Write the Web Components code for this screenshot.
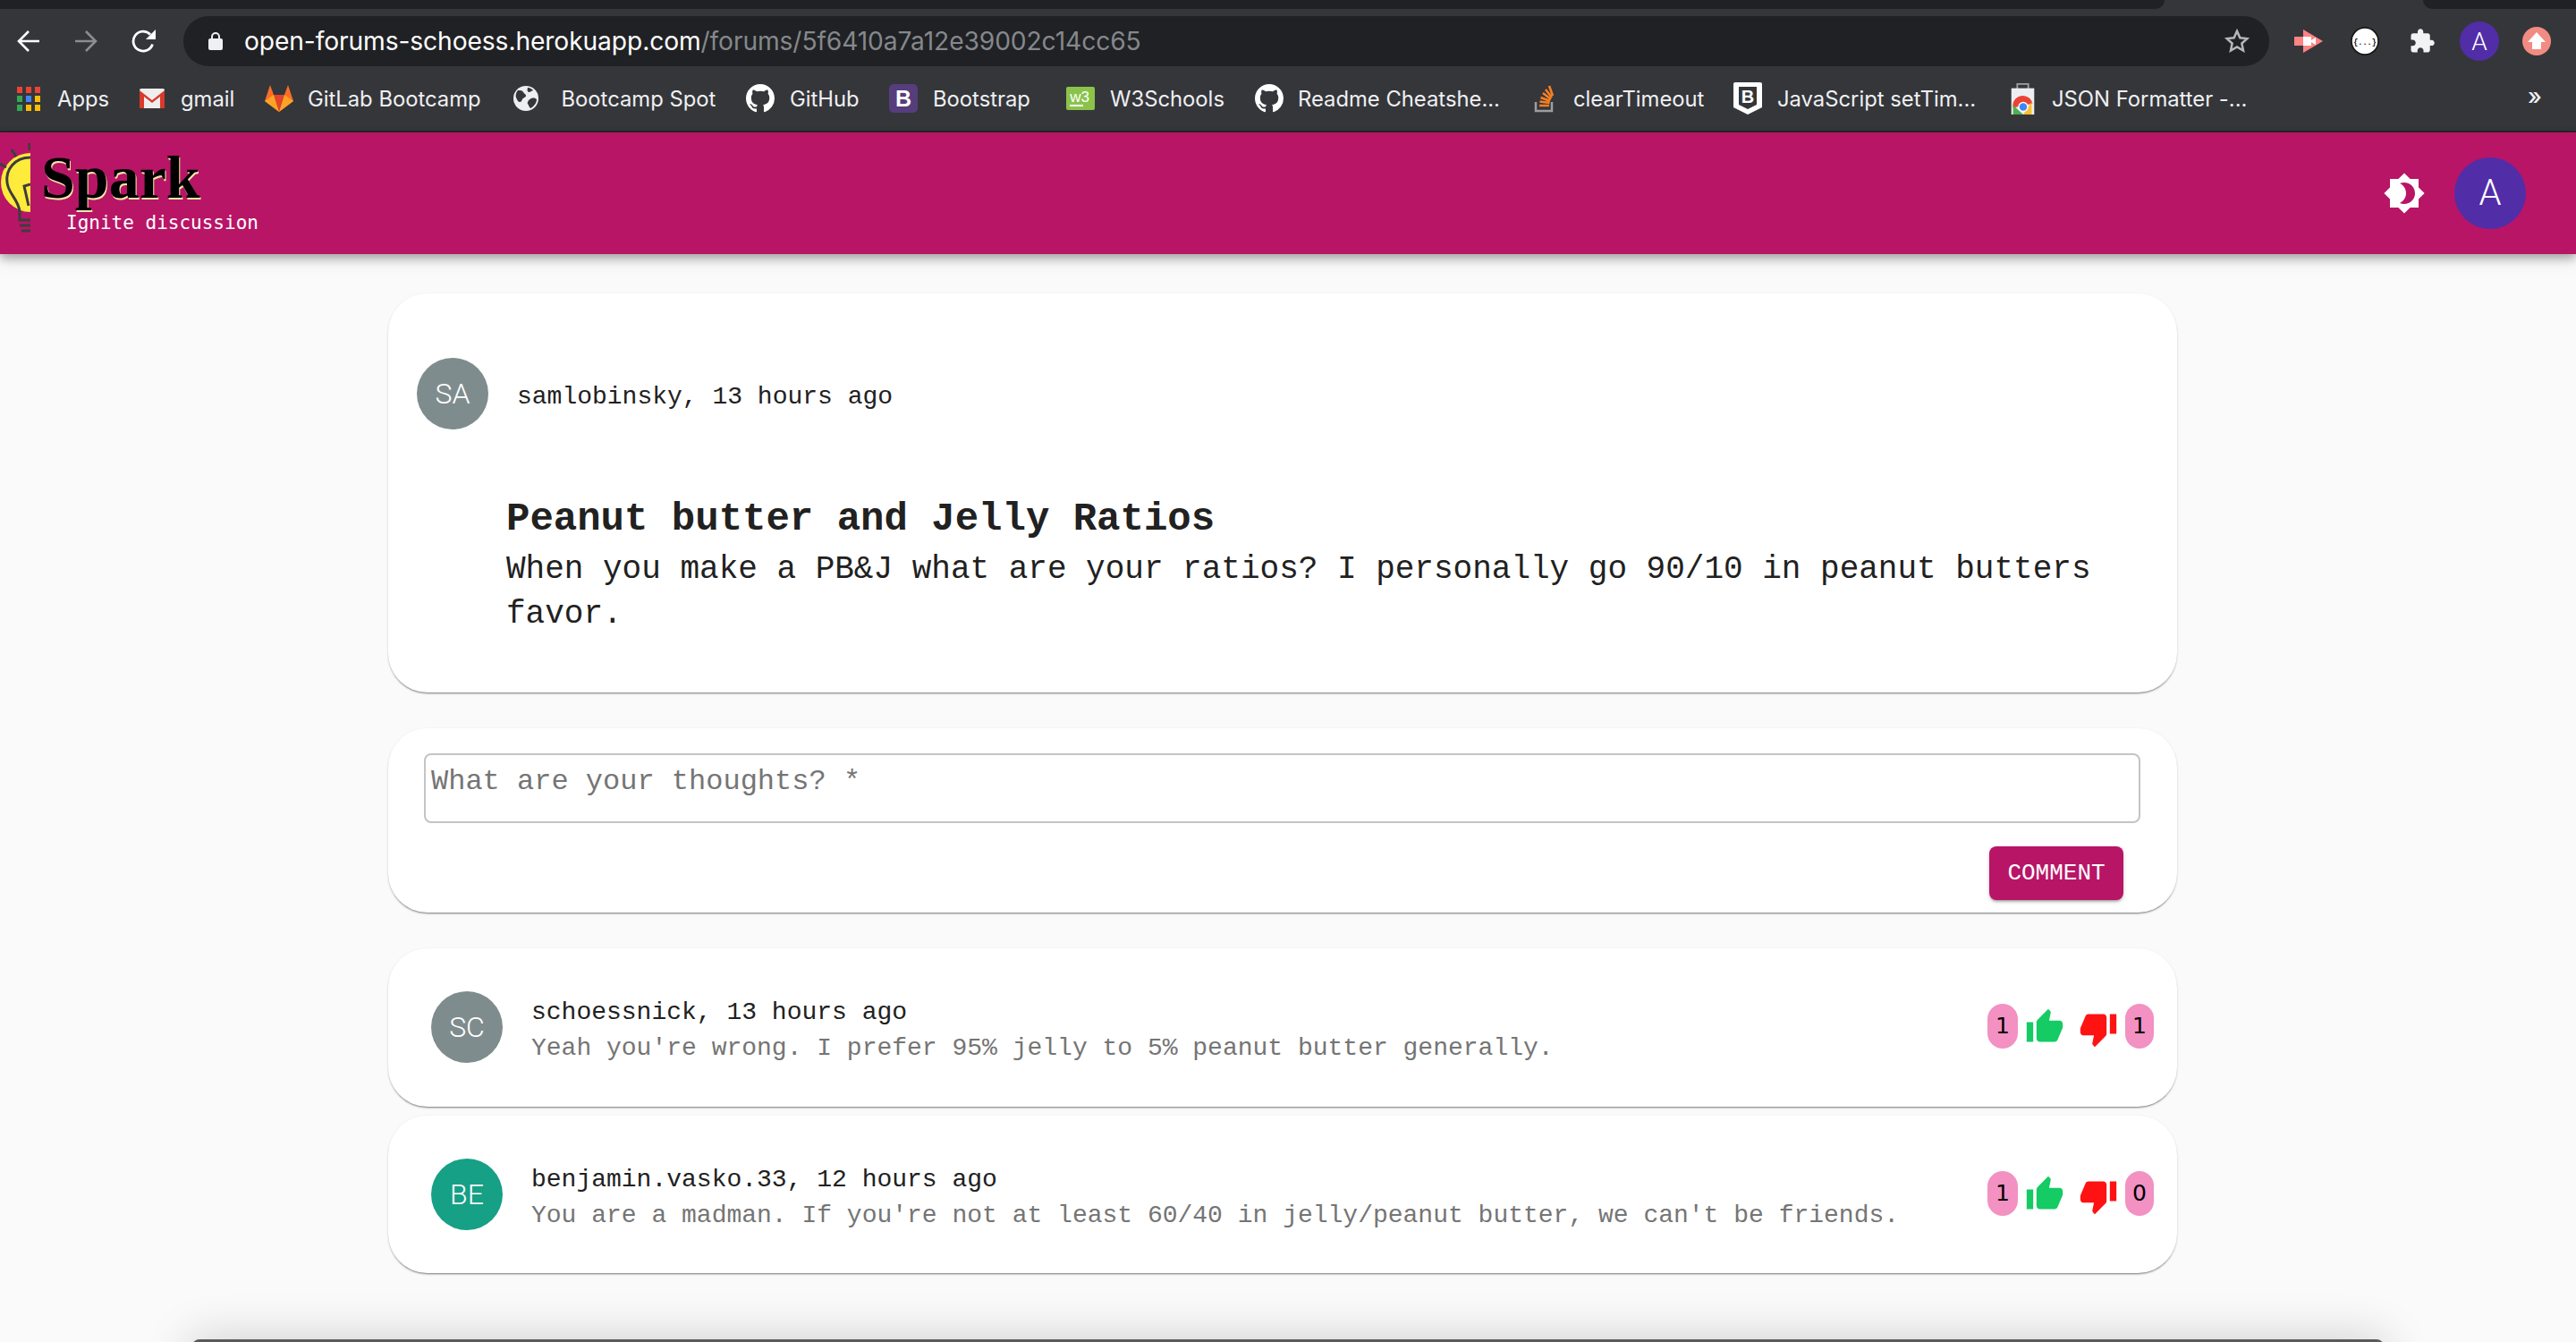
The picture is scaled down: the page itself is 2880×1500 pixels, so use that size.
<!DOCTYPE html>
<html lang="en"><head><meta charset="utf-8"><title>Spark</title>
<style>
html,body{margin:0;padding:0;height:1500px;overflow:hidden;background:#fafafa;font-family:"Liberation Mono",monospace}
</style></head>
<body>
<browser-chrome>
  <book-mark w="137" o="45"><svg slot="icon" width="26" height="27" viewBox="0 0 26 27"><g><rect x="0" y="0" width="6" height="7" fill="#ea4335"/><rect x="10" y="0" width="6" height="7" fill="#ea4335"/><rect x="20" y="0" width="6" height="7" fill="#ea4335"/><rect x="0" y="10" width="6" height="7" fill="#34a853"/><rect x="10" y="10" width="6" height="7" fill="#4285f4"/><rect x="20" y="10" width="6" height="7" fill="#fbbc05"/><rect x="0" y="20" width="6" height="7" fill="#34a853"/><rect x="10" y="20" width="6" height="7" fill="#fbbc05"/><rect x="20" y="20" width="6" height="7" fill="#fbbc05"/></g></svg>Apps</book-mark>
  <book-mark w="140" o="46"><svg slot="icon" width="28" height="22" viewBox="0 0 28 22"><rect width="28" height="22" rx="2" fill="#eee"/><path d="M0 2 14 13 28 2v20h-5V9L14 16 5 9v13H0z" fill="#d93a2b"/></svg>gmail</book-mark>
  <book-mark w="278" o="48"><svg slot="icon" width="32" height="30" viewBox="0 0 32 30"><path d="M16 30 0 18 3 9 6 0l4 11z" fill="#fc6d26"/><path d="M16 30 32 18 29 9 26 0l-4 11z" fill="#fc6d26"/><path d="M16 30 10 11h12z" fill="#e24329"/><path d="M16 30 0 18l10-7zM16 30l16-12-10-7z" fill="#fca326"/></svg>GitLab Bootcamp</book-mark>
  <book-mark w="260" o="53.5"><svg slot="icon" width="28" height="28" viewBox="0 0 28 28"><circle cx="14" cy="14" r="14" fill="#eceff1"/><path d="M5 5c3 0 5 0 6 2s3 2 3 4-3 2-4 4-1 3-3 3-3-3-4-5 0-6 2-8zM20 14c3-1 5 0 6 1 0 4-3 8-7 10-2-2-2-4-3-5s1-5 4-6zM16 2c3 0 5 2 6 3l-4 2c-2 0-3-2-2-5z" fill="#35363a"/></svg>Bootcamp Spot</book-mark>
  <book-mark w="160" o="49"><svg slot="icon" width="32" height="32" viewBox="0 0 16 16"><path fill="#fff" d="M8 0C3.58 0 0 3.58 0 8c0 3.54 2.29 6.53 5.47 7.59.4.07.55-.17.55-.38 0-.19-.01-.82-.01-1.49-2.01.37-2.53-.49-2.69-.94-.09-.23-.48-.94-.82-1.13-.28-.15-.68-.52-.01-.53.63-.01 1.08.58 1.23.82.72 1.21 1.87.87 2.33.66.07-.52.28-.87.51-1.07-1.78-.2-3.64-.89-3.64-3.95 0-.87.31-1.59.82-2.15-.08-.2-.36-1.02.08-2.12 0 0 .67-.21 2.2.82.64-.18 1.32-.27 2-.27.68 0 1.36.09 2 .27 1.53-1.04 2.2-.82 2.2-.82.44 1.1.16 1.92.08 2.12.51.56.82 1.27.82 2.15 0 3.07-1.87 3.75-3.65 3.95.29.25.54.73.54 1.48 0 1.07-.01 1.93-.01 2.2 0 .21.15.46.55.38A8.013 8.013 0 0 0 16 8c0-4.42-3.58-8-8-8z"/></svg>GitHub</book-mark>
  <book-mark w="198" o="49"><svg slot="icon" width="32" height="32" viewBox="0 0 32 32"><rect width="32" height="32" rx="5" fill="#563d7c"/><text x="16" y="25" text-anchor="middle" font-family="Liberation Sans" font-weight="700" font-size="25" fill="#fff">B</text></svg>Bootstrap</book-mark>
  <book-mark w="211" o="49"><svg slot="icon" width="32" height="26" viewBox="0 0 32 26"><rect width="32" height="26" rx="2" fill="#8bc34a"/><text x="15" y="17" text-anchor="middle" font-family="Liberation Sans" font-size="17" fill="#fff">w3</text><rect x="4" y="20" width="15" height="2" fill="#fff"/></svg>W3Schools</book-mark>
  <book-mark w="312" o="48"><svg slot="icon" width="32" height="32" viewBox="0 0 16 16"><path fill="#fff" d="M8 0C3.58 0 0 3.58 0 8c0 3.54 2.29 6.53 5.47 7.59.4.07.55-.17.55-.38 0-.19-.01-.82-.01-1.49-2.01.37-2.53-.49-2.69-.94-.09-.23-.48-.94-.82-1.13-.28-.15-.68-.52-.01-.53.63-.01 1.08.58 1.23.82.72 1.21 1.87.87 2.33.66.07-.52.28-.87.51-1.07-1.78-.2-3.64-.89-3.64-3.95 0-.87.31-1.59.82-2.15-.08-.2-.36-1.02.08-2.12 0 0 .67-.21 2.2.82.64-.18 1.32-.27 2-.27.68 0 1.36.09 2 .27 1.53-1.04 2.2-.82 2.2-.82.44 1.1.16 1.92.08 2.12.51.56.82 1.27.82 2.15 0 3.07-1.87 3.75-3.65 3.95.29.25.54.73.54 1.48 0 1.07-.01 1.93-.01 2.2 0 .21.15.46.55.38A8.013 8.013 0 0 0 16 8c0-4.42-3.58-8-8-8z"/></svg>Readme Cheatshe...</book-mark>
  <book-mark w="223" o="44"><svg slot="icon" width="24" height="32" viewBox="0 0 24 32"><path d="M2 20v10h18V20" fill="none" stroke="#9e9e9e" stroke-width="2.5"/><path d="M6 24h11M6.500 19.500l11 1.500M7.500 15l10.500 4M10 10l9 7M13 6l7 9M17 2l4 11" stroke="#f48024" stroke-width="2.600" fill="none"/></svg>clearTimeout</book-mark>
  <book-mark w="310" o="49"><svg slot="icon" width="32" height="36" viewBox="0 0 32 36"><path d="M2 0h28a2 2 0 0 1 2 2v26l-16 8-16-8V2a2 2 0 0 1 2-2z" fill="#fff"/><path d="M6 5h20v20l-10 5-10-5z" fill="#35363a"/><text x="16" y="23" text-anchor="middle" font-family="Liberation Sans" font-weight="700" font-size="20" fill="#fff">B</text></svg>JavaScript setTim...</book-mark>
  <book-mark w="300" o="46"><svg slot="icon" width="27" height="36" viewBox="0 0 27 38"><path d="M7 8V2h13v6" fill="none" stroke="#9e9e9e" stroke-width="2"/><rect y="7" width="27" height="31" fill="#eceff1"/><path d="M2 30a11.500 11.500 0 0 1 23-5z" fill="#ea4335"/><path d="M2 27v11h12z" fill="#4caf50"/><path d="M14 38h10V23z" fill="#fbc02d"/><circle cx="14" cy="29" r="6" fill="#fff"/><circle cx="14" cy="29" r="4.500" fill="#4285f4"/></svg>JSON Formatter -...</book-mark>
</browser-chrome>
<app-header></app-header>
<main-column>
  <post-card></post-card>
  <reply-box></reply-box>
  <comment-list>
    <comment-card initials="SC" bg="#7f8c8d" who="schoessnick, 13 hours ago" up="1" down="1">Yeah you're wrong. I prefer 95% jelly to 5% peanut butter generally.</comment-card>
    <comment-card initials="BE" bg="#16a085" who="benjamin.vasko.33, 12 hours ago" up="1" down="0">You are a madman. If you're not at least 60/40 in jelly/peanut butter, we can't be friends.</comment-card>
  </comment-list>
</main-column>
<other-window></other-window>
<script>
function def(name, html, init){
  const t=document.createElement('template'); t.innerHTML=html;
  customElements.define(name, class extends HTMLElement{
    constructor(){super();this.attachShadow({mode:'open'}).appendChild(t.content.cloneNode(true));}
    connectedCallback(){ if(init) init.call(this,this.shadowRoot); }
  });
}
const UI='Inter,"Noto Sans",sans-serif';
def('book-mark',`<style>
:host{display:flex;align-items:center;flex:none;height:40px;color:#eef0f2;font:400 23.800px ${UI};white-space:nowrap}
.i{display:flex;align-items:center;flex:none}
</style><span class="i"><slot name="icon"></slot></span><slot></slot>`,function(r){
  this.style.width=this.getAttribute('w')+'px';
  r.querySelector('.i').style.width=this.getAttribute('o')+'px';
});
def('browser-chrome',`<style>
:host{display:block;height:148px;background:#35363a;box-sizing:border-box;border-bottom:2px solid #26272a;position:relative;overflow:hidden}
.tabs{height:10px;display:flex}
.d{background:#202124}
.d1{width:2420px;border-bottom-right-radius:10px}
.gap{width:289px}
.d2{flex:1;border-bottom-left-radius:10px}
.tool{height:56px;margin-top:8px;display:flex;align-items:center;padding-left:19px}
.nav{flex:none;width:26px;height:26px;display:block}
.url{margin-left:30px;width:2332px;height:56px;background:#202124;border-radius:28px;display:flex;align-items:center;padding:0 21px 0 28px;box-sizing:border-box;flex:none}
.lock{flex:none;margin-right:24px}
.t{font:400 28.200px ${UI};color:#fff;white-space:nowrap;flex:1;letter-spacing:-.1px}
.t span{color:#85888c}
.ex{flex:none;display:block}
.books{display:flex;align-items:center;height:40px;margin-top:16px;padding-left:19px;position:relative}
.more{position:absolute;left:2826px;top:0;color:#eef0f2;font:500 26px/36px ${UI}}
</style>
<div class="tabs"><div class="d d1"></div><div class="gap"></div><div class="d d2"></div></div>
<div class="tool">
<svg class="nav" viewBox="0 0 26 26" fill="none" stroke="#fff" stroke-width="2.600"><path d="M25 13H2M13 2 2 13l11 11"/></svg>
<svg class="nav" style="margin-left:38px" viewBox="0 0 26 26" fill="none" stroke="#8b8d90" stroke-width="2.600"><path d="M1 13h23M13 2l11 11-11 11"/></svg>
<svg class="nav" style="margin-left:38px;width:28px;height:28px" viewBox="0 0 28 28" fill="none"><path d="M23.500 17.500A11 11 0 1 1 21 6.500" stroke="#fff" stroke-width="2.800"/><path d="M27 1v11H16z" fill="#fff"/></svg>
<div class="url">
<svg class="lock" width="16" height="20" viewBox="0 0 16 20"><rect y="7" width="16" height="13" rx="2" fill="#eef0f2"/><path d="M4 8V5a4 4 0 0 1 8 0v3" fill="none" stroke="#eef0f2" stroke-width="2"/></svg>
<div class="t">open-forums-schoess.herokuapp.com<span>/forums/5f6410a7a12e39002c14cc65</span></div>
<svg class="ex" width="30" height="30" viewBox="0 0 24 24" fill="none" stroke="#b5b7ba" stroke-width="2"><path d="m12 3 2.700 6 6.300.7-4.700 4.300 1.300 6.500L12 17.200 6.400 20.500 7.700 14 3 9.700 9.300 9z"/></svg>
</div>
<svg class="ex" style="margin-left:28px" width="32" height="26" viewBox="0 0 32 26"><path d="M0 8h10V0l22 13-22 13v-8H0z" fill="#ff8383"/><path d="M10 8h9v10h-9z M19 12l5-3v8l-5-3z" fill="#fff"/></svg>
<svg class="ex" style="margin-left:31px" width="32" height="32" viewBox="0 0 32 32"><circle cx="16" cy="16" r="15" fill="#fff" stroke="#111" stroke-width="1.500"/><text x="16" y="20" text-anchor="middle" font-family="Liberation Mono" font-size="8.500" font-weight="700" fill="#111">{...}</text></svg>
<svg class="ex" style="margin-left:33px" width="30" height="30" viewBox="0 0 24 24"><path fill="#f1f3f4" d="M20.500 11H19V7c0-1.100-.9-2-2-2h-4V3.500C13 2.120 11.880 1 10.500 1S8 2.120 8 3.500V5H4c-1.100 0-2 .9-2 2v3.800h1.500c1.500 0 2.700 1.200 2.700 2.700S5 16.200 3.500 16.200H2V20c0 1.100.9 2 2 2h3.800v-1.500c0-1.500 1.200-2.700 2.700-2.700s2.700 1.200 2.700 2.700V22H17c1.100 0 2-.9 2-2v-4h1.500c1.380 0 2.500-1.120 2.500-2.500S21.880 11 20.500 11z"/></svg>
<svg class="ex" style="margin-left:27px" width="44" height="44" viewBox="0 0 44 44"><circle cx="22" cy="22" r="22" fill="#512da8"/><text x="22" y="32" text-anchor="middle" font-family="Roboto" font-weight="300" font-size="28" fill="#fff">A</text></svg>
<svg class="ex" style="margin-left:26px" width="32" height="32" viewBox="0 0 32 32"><circle cx="16" cy="16" r="16" fill="#f28b82"/><path d="M16 6 26 17h-5v8H11v-8H6z" fill="#fff"/></svg>
</div>
<div class="books"><slot></slot><div class="more">»</div></div>`);
def('app-header',`<style>
:host{display:flex;align-items:center;height:136px;background:#b81567;box-shadow:0 4px 10px rgba(0,0,0,.3),0 8px 16px rgba(0,0,0,.1);position:relative;z-index:2}
.bulb{display:block;flex:none;align-self:flex-start}
.brand{display:flex;flex-direction:column;margin-left:12px;align-self:flex-start}
.sp{font:700 68px/68px "Liberation Serif",serif;color:#000;text-shadow:1px 2px 0 #f7e8a8;margin-top:16px;height:68px}
.tag{font:400 21px/26px "DejaVu Sans Mono",monospace;color:#fff;margin:4px 0 0 28px;white-space:nowrap}
.sp2{flex:1}
.toggle{display:block;flex:none;margin-right:32px}
.av{width:80px;height:80px;border-radius:50%;background:#512da8;color:#fff;font:300 40px/80px Roboto,sans-serif;text-align:center;margin-right:56px;flex:none}
</style>
<svg class="bulb" width="34" height="120" viewBox="0 0 34 120"><circle cx="34" cy="56" r="33" fill="#ffeb3b"/><g fill="none" stroke="#3d3d3d" stroke-width="3"><path d="M34 28C16 28 6 42 8 56c1 12 12 18 14 32v10h12"/><path d="M34 58l-7 2 5 22M22 104h12M24 110h10"/><path d="M33 12v8M13 19l5 8M0 35l7 4"/></g></svg>
<div class="brand"><div class="sp">Spark</div><div class="tag">Ignite discussion</div></div>
<div class="sp2"></div>
<svg class="toggle" width="48" height="48" viewBox="0 0 24 24"><path fill="#fff" d="M20 8.690V4h-4.690L12 .69 8.690 4H4v4.690L.69 12 4 15.310V20h4.690L12 23.310 15.310 20H20v-4.690L23.310 12 20 8.690zM12 18c-.89 0-1.740-.2-2.500-.55C11.560 16.500 13 14.420 13 12s-1.440-4.500-3.500-5.450C10.260 6.200 11.110 6 12 6c3.310 0 6 2.690 6 6s-2.690 6-6 6z"/></svg>
<div class="av">A</div>`);
def('main-column',`<style>:host{display:flex;flex-direction:column;width:2000px;margin-left:434px;padding-top:44px}</style><slot></slot>`);
const CARD=`box-sizing:border-box;background:#fff;border-radius:44px;box-shadow:0 2px 2px -1px rgba(0,0,0,.45),0 1px 3px rgba(0,0,0,.12);`;
const AV=`width:80px;height:80px;border-radius:50%;color:#fff;font:300 32px/80px Roboto,sans-serif;text-align:center;flex:none;`;
def('post-card',`<style>
:host{display:block;${CARD}height:446px;padding:72px 32px 0;color:#212121}
.h{display:flex;align-items:center}
.av{${AV}background:#7f8c8d}
.n{font:400 28px/40px "Liberation Mono",monospace;margin:8px 0 0 32px}
.b{padding-left:100px;margin-top:70px}
h1{font:700 44px/60px "Liberation Mono",monospace;margin:0 0 2px}
p{font:400 36px/50px "Liberation Mono",monospace;margin:0;width:1830px}
</style>
<div class="h"><div class="av">SA</div><div class="n">samlobinsky, 13 hours ago</div></div>
<div class="b"><h1>Peanut butter and Jelly Ratios</h1><p>When you make a PB&amp;J what are your ratios? I personally go 90/10 in peanut butters favor.</p></div>`);
def('reply-box',`<style>
:host{display:flex;flex-direction:column;${CARD}height:206px;margin-top:40px;padding:28px 41px 0 40px}
.in{box-sizing:border-box;height:78px;border:2px solid #c4c4c4;border-radius:8px;padding:5px 6px;font:400 32px/50px "Liberation Mono",monospace;color:#757575;white-space:nowrap}
.btn{align-self:flex-end;margin:26px 19px 0 0;width:150px;height:60px;background:#b81567;border-radius:8px;color:#fff;font:400 26px/60px "Liberation Mono",monospace;text-align:center;box-shadow:0 3px 3px -2px rgba(0,0,0,.3),0 2px 4px rgba(0,0,0,.2)}
</style><div class="in">What are your thoughts? *</div><div class="btn">COMMENT</div>`);
def('comment-list',`<style>:host{display:flex;flex-direction:column;gap:10px;margin-top:40px}</style><slot></slot>`);
const UP='M1 21h4V9H1v12zm22-11c0-1.100-.9-2-2-2h-6.310l.95-4.570.03-.32c0-.41-.17-.79-.44-1.060L14.170 1 7.590 7.590C7.220 7.950 7 8.450 7 9v10c0 1.100.9 2 2 2h9c.83 0 1.540-.5 1.840-1.220l3.020-7.050c.09-.23.14-.47.14-.73v-2z';
const DOWN='M15 3H6c-.83 0-1.540.5-1.840 1.220l-3.020 7.050c-.09.23-.14.47-.14.73v2c0 1.100.9 2 2 2h6.310l-.95 4.570-.03.32c0 .41.17.79.44 1.060L9.830 23l6.590-6.590c.36-.36.58-.86.58-1.410V5c0-1.100-.9-2-2-2zm4 0v12h4V3h-4z';
def('comment-card',`<style>
:host{display:flex;${CARD}height:176.500px;padding:48px 26px 0 48px}
.av{${AV}}
.c{margin:4px 0 0 32px;flex:1;min-width:0}
.n{font:400 28px/40px "Liberation Mono",monospace;color:#212121;white-space:nowrap}
.m{font:400 28px/40px "Liberation Mono",monospace;color:#757575;white-space:nowrap}
.v{display:flex;align-items:flex-start;margin-top:14px;flex:none}
.b{height:50px;border-radius:17px;background:#f291c2;color:#000;font:400 25px/50px "DejaVu Sans",sans-serif;text-align:center;flex:none}
.l{width:34px}.r{width:32px}
svg{display:block;flex:none}
.u{margin:4px 0 0 8px;fill:#14cb64}
.d{margin:6px 8px 0 16px;fill:#ff1212}
</style>
<div class="av"></div>
<div class="c"><div class="n"></div><div class="m"><slot></slot></div></div>
<div class="v"><div class="b l"></div><svg class="u" width="44" height="44" viewBox="0 0 24 24"><path d="${UP}"/></svg><svg class="d" width="44" height="44" viewBox="0 0 24 24"><path d="${DOWN}"/></svg><div class="b r"></div></div>`,function(r){
  const a=r.querySelector('.av');a.textContent=this.getAttribute('initials');a.style.background=this.getAttribute('bg');
  r.querySelector('.n').textContent=this.getAttribute('who');
  r.querySelector('.l').textContent=this.getAttribute('up');
  r.querySelector('.r').textContent=this.getAttribute('down');
});
def('other-window',`<style>:host{display:block;position:absolute;left:215px;top:1497px;width:2450px;height:60px;background:#5a5a5a;border-radius:8px 8px 0 0;box-shadow:0 0 50px 4px rgba(0,0,0,.16)}</style>`);
</script>
</body></html>
